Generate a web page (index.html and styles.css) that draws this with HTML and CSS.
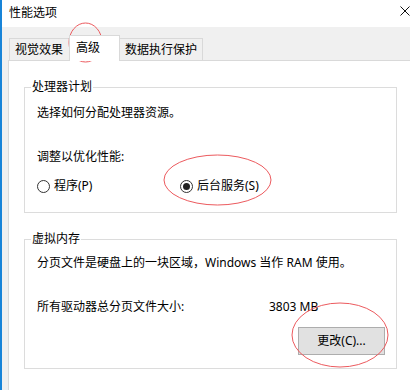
FILE: index.html
```html
<!DOCTYPE html>
<html lang="zh-CN">
<head>
<meta charset="utf-8">
<title>性能选项</title>
<link rel="stylesheet" href="styles.css">
</head>
<body>
<div class="window">
  <div class="titlebar">
    <span class="title">性能选项</span>
    <svg class="close" width="10" height="10" viewBox="0 0 10 10"><path d="M0.5 0.5 L9.5 9.5 M9.5 0.5 L0.5 9.5" stroke="#111" stroke-width="1" fill="none"/></svg>
  </div>
  <div class="frame">
    <div class="tabs">
      <div class="tab first">视觉效果</div>
      <div class="tab active">高级</div>
      <div class="tab last">数据执行保护</div>
    </div>
    <div class="panel">
      <fieldset class="group g1">
        <legend>处理器计划</legend>
        <p class="line">选择如何分配处理器资源。</p>
        <p class="line sub">调整以优化性能:</p>
        <div class="radios">
          <label class="radio r1"><span class="circle"></span>程序(P)</label>
          <label class="radio checked"><span class="circle"><span class="dot"></span></span>后台服务(S)</label>
        </div>
      </fieldset>
      <fieldset class="group g2">
        <legend>虚拟内存</legend>
        <p class="line">分页文件是硬盘上的一块区域，Windows 当作 RAM 使用。</p>
        <div class="line size"><span class="size-label">所有驱动器总分页文件大小:</span><span>3803 MB</span></div>
        <div class="btn-row"><button class="btn">更改(C)...</button></div>
      </fieldset>
    </div>
  </div>
  <svg class="marks" width="410" height="390" viewBox="0 0 410 390">
    <ellipse cx="85.5" cy="42.5" rx="16.5" ry="19.5" fill="none" stroke="#ec5a5e" stroke-width="1"/>
    <ellipse cx="217.5" cy="180" rx="53.5" ry="25" fill="none" stroke="#ec5a5e" stroke-width="1"/>
    <ellipse cx="340" cy="335" rx="48" ry="32" fill="none" stroke="#ec5a5e" stroke-width="1"/>
  </svg>
</div>
</body>
</html>
```
FILE: styles.css
```css
* { box-sizing: border-box; }
html, body {
  margin: 0;
  padding: 0;
  background: #fff;
}
body {
  width: 410px;
  height: 390px;
  overflow: hidden;
  font-family: "Noto Sans", "Noto Sans CJK SC", sans-serif;
  font-size: 12px;
  line-height: 16px;
  color: #000;
}
.window {
  position: relative;
  width: 410px;
  height: 390px;
  display: flex;
  flex-direction: column;
  border-left: 2px solid #1884d8;
}
.titlebar {
  height: 27px;
  flex: none;
  display: flex;
  justify-content: space-between;
  align-items: flex-start;
  background: #fff;
  padding-left: 7px;
}
.title {
  margin-top: 5px;
}
.close {
  margin-top: 6px;
}
.frame {
  flex: 1;
  display: flex;
  flex-direction: column;
  background: #f0f0f0;
  padding-left: 6px;
}
.tabs {
  height: 33px;
  flex: none;
  display: flex;
  align-items: flex-end;
  padding-left: 1px;
}
.tab {
  height: 22px;
  border: 1px solid #d9d9d9;
  border-bottom: none;
  background: #f0f0f0;
  padding: 3px 5px 0 5px;
  white-space: nowrap;
}
.tab.first { width: 61px; }
.tab.active {
  position: relative;
  z-index: 1;
  width: 51px;
  height: 26px;
  margin-left: -1px;
  margin-bottom: -1px;
  background: #fff;
  padding: 4px 0 0 6px;
}
.tab.last {
  margin-left: -1px;
  width: 84px;
}
.panel {
  flex: 1;
  background: #fff;
  border-top: 1px solid #d9d9d9;
  border-left: 1px solid #d9d9d9;
  padding: 18px 0 0 15px;
}
.group {
  width: 373px;
  margin: 0;
  border: 1px solid #dcdcdc;
  padding: 0 11px 0 12px;
  min-inline-size: 0;
}
.group legend {
  padding: 0 1px;
  margin-left: -6px;
  line-height: 16px;
}
.line {
  margin: 0;
  height: 16px;
}
.g1 { padding-top: 10px; padding-bottom: 18px; }
.g1 .sub { margin-top: 28px; }
.radios {
  display: flex;
  margin-top: 13px;
  height: 16px;
  align-items: center;
}
.radio {
  display: flex;
  align-items: center;
  gap: 4px;
}
.radio.r1 { width: 143px; }
.circle {
  width: 13px;
  height: 13px;
  border: 1px solid #333;
  border-radius: 50%;
  display: flex;
  align-items: center;
  justify-content: center;
  flex: none;
}
.dot {
  width: 7px;
  height: 7px;
  border-radius: 50%;
  background: #222;
}
.g2 {
  margin-top: 18px;
  padding-top: 8px;
  padding-bottom: 13px;
}
.size {
  display: flex;
  margin-top: 28px;
}
.size-label { width: 232px; }
.btn-row {
  display: flex;
  justify-content: flex-end;
  margin-top: 12px;
}
.btn {
  width: 87px;
  height: 28px;
  background: #e1e1e1;
  border: 1px solid #adadad;
  font: inherit;
  color: #000;
  padding: 0;
}
.marks {
  position: absolute;
  left: -2px;
  top: 0;
  pointer-events: none;
}
```
